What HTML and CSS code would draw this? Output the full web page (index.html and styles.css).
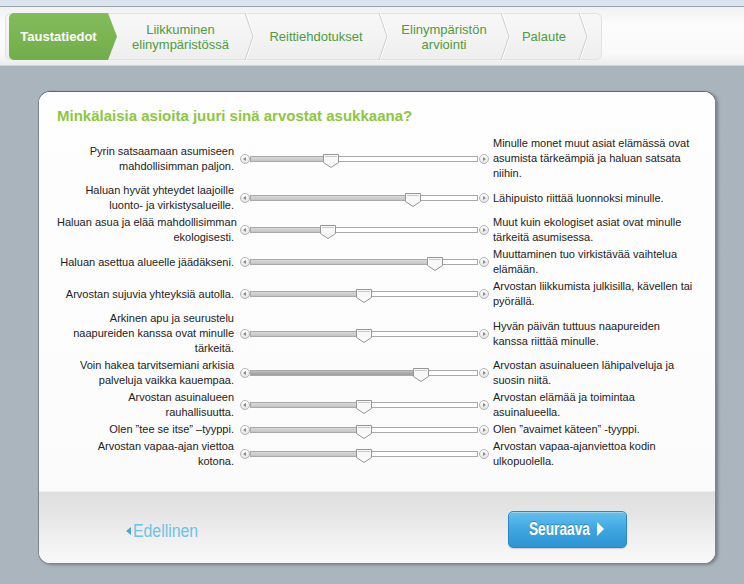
FILE: index.html
```html
<!DOCTYPE html>
<html lang="fi">
<head>
<meta charset="utf-8">
<title>Taustatiedot</title>
<link rel="stylesheet" href="styles.css">
</head>
<body>
<div class="topbar"></div>
<div class="navband">
  <nav class="steps">
    <div class="step active">Taustatiedot</div>
    <div class="step s2">Liikkuminen<br>elinympäristössä</div>
    <svg class="sep" viewBox="0 0 10 47"><polyline points="2,0 10,23.5 2,47" stroke="#ffffff" fill="none"/><polyline points="1,0 9,23.5 1,47" stroke="#cdcdcd" fill="none"/></svg>
    <div class="step s3">Reittiehdotukset</div>
    <svg class="sep" viewBox="0 0 10 47"><polyline points="2,0 10,23.5 2,47" stroke="#ffffff" fill="none"/><polyline points="1,0 9,23.5 1,47" stroke="#cdcdcd" fill="none"/></svg>
    <div class="step s4">Elinympäristön<br>arviointi</div>
    <svg class="sep" viewBox="0 0 10 47"><polyline points="2,0 10,23.5 2,47" stroke="#ffffff" fill="none"/><polyline points="1,0 9,23.5 1,47" stroke="#cdcdcd" fill="none"/></svg>
    <div class="step s5">Palaute</div>
    <svg class="sep" viewBox="0 0 10 47"><polyline points="2,0 10,23.5 2,47" stroke="#ffffff" fill="none"/><polyline points="1,0 9,23.5 1,47" stroke="#cdcdcd" fill="none"/></svg>
    <div class="step end"></div>
  </nav>
</div>

<main class="stage">
  <section class="panel">
    <div class="content">
      <h1 class="title">Minkälaisia asioita juuri sinä arvostat asukkaana?</h1>
      <div class="rows">

        <div class="row">
          <div class="lbl left">Pyrin satsaamaan asumiseen<br>mahdollisimman paljon.</div>
          <div class="slider"><span class="knob kl"></span><div class="track"><div class="fill" style="width:35.2%"></div><svg class="thumb" style="left:calc(35.2% - 8px)" viewBox="0 0 16 14"><path d="M0.5 0.5H15.5V8.5L8 13.5L0.5 8.5Z" fill="#f8f8f8" stroke="#969696"/><path d="M2 2.5H14" stroke="#c8c8c8"/></svg></div><span class="knob kr"></span></div>
          <div class="lbl right">Minulle monet muut asiat elämässä ovat<br>asumista tärkeämpiä ja haluan satsata<br>niihin.</div>
        </div>

        <div class="row">
          <div class="lbl left">Haluan hyvät yhteydet laajoille<br>luonto- ja virkistysalueille.</div>
          <div class="slider"><span class="knob kl"></span><div class="track"><div class="fill" style="width:71.8%"></div><svg class="thumb" style="left:calc(71.8% - 8px)" viewBox="0 0 16 14"><path d="M0.5 0.5H15.5V8.5L8 13.5L0.5 8.5Z" fill="#f8f8f8" stroke="#969696"/><path d="M2 2.5H14" stroke="#c8c8c8"/></svg></div><span class="knob kr"></span></div>
          <div class="lbl right">Lähipuisto riittää luonnoksi minulle.</div>
        </div>

        <div class="row">
          <div class="lbl left">Haluan asua ja elää mahdollisimman<br>ekologisesti.</div>
          <div class="slider"><span class="knob kl"></span><div class="track"><div class="fill" style="width:33.9%"></div><svg class="thumb" style="left:calc(33.9% - 8px)" viewBox="0 0 16 14"><path d="M0.5 0.5H15.5V8.5L8 13.5L0.5 8.5Z" fill="#f8f8f8" stroke="#969696"/><path d="M2 2.5H14" stroke="#c8c8c8"/></svg></div><span class="knob kr"></span></div>
          <div class="lbl right">Muut kuin ekologiset asiat ovat minulle<br>tärkeitä asumisessa.</div>
        </div>

        <div class="row">
          <div class="lbl left">Haluan asettua alueelle jäädäkseni.</div>
          <div class="slider"><span class="knob kl"></span><div class="track"><div class="fill" style="width:81.5%"></div><svg class="thumb" style="left:calc(81.5% - 8px)" viewBox="0 0 16 14"><path d="M0.5 0.5H15.5V8.5L8 13.5L0.5 8.5Z" fill="#f8f8f8" stroke="#969696"/><path d="M2 2.5H14" stroke="#c8c8c8"/></svg></div><span class="knob kr"></span></div>
          <div class="lbl right">Muuttaminen tuo virkistävää vaihtelua<br>elämään.</div>
        </div>

        <div class="row">
          <div class="lbl left">Arvostan sujuvia yhteyksiä autolla.</div>
          <div class="slider"><span class="knob kl"></span><div class="track"><div class="fill" style="width:50.2%"></div><svg class="thumb" style="left:calc(50.2% - 8px)" viewBox="0 0 16 14"><path d="M0.5 0.5H15.5V8.5L8 13.5L0.5 8.5Z" fill="#f8f8f8" stroke="#969696"/><path d="M2 2.5H14" stroke="#c8c8c8"/></svg></div><span class="knob kr"></span></div>
          <div class="lbl right">Arvostan liikkumista julkisilla, kävellen tai<br>pyörällä.</div>
        </div>

        <div class="row">
          <div class="lbl left">Arkinen apu ja seurustelu<br>naapureiden kanssa ovat minulle<br>tärkeitä.</div>
          <div class="slider"><span class="knob kl"></span><div class="track"><div class="fill" style="width:50.2%"></div><svg class="thumb" style="left:calc(50.2% - 8px)" viewBox="0 0 16 14"><path d="M0.5 0.5H15.5V8.5L8 13.5L0.5 8.5Z" fill="#f8f8f8" stroke="#969696"/><path d="M2 2.5H14" stroke="#c8c8c8"/></svg></div><span class="knob kr"></span></div>
          <div class="lbl right">Hyvän päivän tuttuus naapureiden<br>kanssa riittää minulle.</div>
        </div>

        <div class="row">
          <div class="lbl left">Voin hakea tarvitsemiani arkisia<br>palveluja vaikka kauempaa.</div>
          <div class="slider"><span class="knob kl"></span><div class="track"><div class="fill dark" style="width:75.3%"></div><svg class="thumb" style="left:calc(75.3% - 8px)" viewBox="0 0 16 14"><path d="M0.5 0.5H15.5V8.5L8 13.5L0.5 8.5Z" fill="#f8f8f8" stroke="#969696"/><path d="M2 2.5H14" stroke="#c8c8c8"/></svg></div><span class="knob kr"></span></div>
          <div class="lbl right">Arvostan asuinalueen lähipalveluja ja<br>suosin niitä.</div>
        </div>

        <div class="row">
          <div class="lbl left">Arvostan asuinalueen<br>rauhallisuutta.</div>
          <div class="slider"><span class="knob kl"></span><div class="track"><div class="fill" style="width:50.2%"></div><svg class="thumb" style="left:calc(50.2% - 8px)" viewBox="0 0 16 14"><path d="M0.5 0.5H15.5V8.5L8 13.5L0.5 8.5Z" fill="#f8f8f8" stroke="#969696"/><path d="M2 2.5H14" stroke="#c8c8c8"/></svg></div><span class="knob kr"></span></div>
          <div class="lbl right">Arvostan elämää ja toimintaa<br>asuinalueella.</div>
        </div>

        <div class="row">
          <div class="lbl left">Olen ”tee se itse” –tyyppi.</div>
          <div class="slider"><span class="knob kl"></span><div class="track"><div class="fill" style="width:50.2%"></div><svg class="thumb" style="left:calc(50.2% - 8px)" viewBox="0 0 16 14"><path d="M0.5 0.5H15.5V8.5L8 13.5L0.5 8.5Z" fill="#f8f8f8" stroke="#969696"/><path d="M2 2.5H14" stroke="#c8c8c8"/></svg></div><span class="knob kr"></span></div>
          <div class="lbl right">Olen ”avaimet käteen” -tyyppi.</div>
        </div>

        <div class="row">
          <div class="lbl left">Arvostan vapaa-ajan viettoa<br>kotona.</div>
          <div class="slider"><span class="knob kl"></span><div class="track"><div class="fill" style="width:50.2%"></div><svg class="thumb" style="left:calc(50.2% - 8px)" viewBox="0 0 16 14"><path d="M0.5 0.5H15.5V8.5L8 13.5L0.5 8.5Z" fill="#f8f8f8" stroke="#969696"/><path d="M2 2.5H14" stroke="#c8c8c8"/></svg></div><span class="knob kr"></span></div>
          <div class="lbl right">Arvostan vapaa-ajanviettoa kodin<br>ulkopuolella.</div>
        </div>

      </div>
    </div>
    <footer class="actions">
      <a class="prev" href="#"><span class="tri-l"></span><span class="prev-txt">Edellinen</span></a>
      <a class="next" href="#"><span class="next-txt">Seuraava</span><span class="tri-r"></span></a>
    </footer>
  </section>
</main>
</body>
</html>
```

FILE: styles.css
```css
html, body {
  margin: 0;
  padding: 0;
}
body {
  width: 744px;
  height: 584px;
  overflow: hidden;
  font-family: "Liberation Sans", Arial, sans-serif;
  font-size: 11px;
  color: #222;
  background: linear-gradient(#9ea8b1 0, #a9b4bd 24px, #aab5be 100%);
}

.topbar {
  height: 6px;
  background: #dbe4ee;
  border-bottom: 1px solid #9aa2aa;
}

.navband {
  height: 59px;
  box-sizing: border-box;
  padding: 6px 0 0 5px;
  background: linear-gradient(#f1f1f1 0, #fcfcfc 30%, #f9f9f9 80%, #ececec 100%);
  border-bottom: 1px solid #d0d4d8;
}

.steps {
  display: flex;
  width: 597px;
  height: 47px;
  box-sizing: border-box;
  padding-left: 4px;
  border-radius: 6px;
  background: linear-gradient(#f8f8f8, #eeeeee);
  box-shadow: inset 0 0 0 1px #e2e2e2;
}

.step {
  display: flex;
  align-items: center;
  justify-content: center;
  text-align: center;
  font-size: 13px;
  line-height: 15px;
  color: #4f9a3e;
  white-space: nowrap;
}

.step.active {
  width: 108px;
  padding-right: 9px;
  box-sizing: border-box;
  color: #fff;
  font-weight: bold;
  background: linear-gradient(#82bd5a, #72ad4b);
  border-radius: 5px 0 0 5px;
  clip-path: polygon(0 0, 99px 0, 108px 50%, 99px 100%, 0 100%);
}
.step.s2 { width: 127px; }
.step.s3 { width: 124px; }
.step.s4 { width: 112px; }
.step.s5 { width: 68px; }
.step.end { width: 14px; }

.sep {
  width: 10px;
  height: 47px;
  flex: none;
}

.stage {
  padding: 25px 0 0 38px;
}

.panel {
  width: 678px;
  height: 473px;
  box-sizing: border-box;
  background: #fff;
  border: 1px solid #7d848b;
  border-top-color: #5f666d;
  border-radius: 12px;
  box-shadow: 2px 1px 3px rgba(60, 66, 72, 0.45);
  display: flex;
  flex-direction: column;
  overflow: hidden;
}

.content {
  height: 399px;
  box-sizing: border-box;
  padding: 15px 0 0 18px;
  background: linear-gradient(#fefefe, #fbfbfb);
}

.title {
  margin: 0 0 11px 0;
  font-size: 15px;
  line-height: 18px;
  font-weight: bold;
  color: #8dc642;
}

.rows {
  display: flex;
  flex-direction: column;
  gap: 2px;
}

.row {
  display: flex;
  align-items: center;
}

.lbl {
  line-height: 15px;
  white-space: nowrap;
}
.lbl.left {
  width: 177px;
  text-align: right;
  flex: none;
}
.lbl.right {
  padding-left: 4px;
}

.slider {
  width: 249px;
  margin-left: 6px;
  display: flex;
  align-items: center;
  flex: none;
}

.knob {
  position: relative;
  width: 10px;
  height: 10px;
  box-sizing: border-box;
  border: 1px solid #b3b3b3;
  border-radius: 50%;
  background: linear-gradient(#ffffff, #e4e4e4);
  flex: none;
}
.knob::after {
  content: "";
  position: absolute;
  top: 2px;
  width: 0;
  height: 0;
  border-top: 2px solid transparent;
  border-bottom: 2px solid transparent;
}
.knob.kl::after {
  left: 2px;
  border-right: 3px solid #8a8a8a;
}
.knob.kr::after {
  left: 3px;
  border-left: 3px solid #8a8a8a;
}
.knob.kr { margin-left: 1px; }

.track {
  position: relative;
  width: 228px;
  height: 6px;
  box-sizing: border-box;
  border: 1px solid #a9a9a9;
  background: #fff;
  flex: none;
}
.fill {
  height: 100%;
  background: linear-gradient(#d9d9d9, #c4c4c4);
}
.fill.dark {
  background: linear-gradient(#bdbdbd, #9c9c9c);
}
.thumb {
  position: absolute;
  top: -3px;
  width: 16px;
  height: 14px;
}

.actions {
  flex: 1;
  display: flex;
  align-items: center;
  justify-content: space-between;
  padding: 3px 88px 0 87px;
  background: linear-gradient(#dfdfdf 0, #e5e5e5 30%, #f3f3f3 75%, #f8f8f8 100%);
  border-top: 1px solid #ececec;
}

.prev {
  display: flex;
  align-items: center;
  margin-top: 4px;
  font-size: 18px;
  color: #6cc3e6;
  text-decoration: none;
}
.prev-txt {
  display: inline-block;
  transform: scaleX(0.88);
  transform-origin: left center;
}
.tri-l {
  width: 0;
  height: 0;
  margin-right: 2px;
  border-top: 4px solid transparent;
  border-bottom: 4px solid transparent;
  border-right: 5px solid #45a8d8;
}

.next {
  width: 119px;
  height: 37px;
  box-sizing: border-box;
  padding: 0 22px 0 20px;
  display: flex;
  align-items: center;
  justify-content: space-between;
  font-weight: bold;
  font-size: 18px;
  color: #fff;
  text-decoration: none;
  text-shadow: 0 -1px 0 rgba(20, 90, 150, 0.5);
  border-radius: 5px;
  border: 1px solid #2a87c6;
  background: linear-gradient(#64c0ee, #3fa6e1 50%, #2d94d4);
  box-shadow: inset 0 1px 0 rgba(255, 255, 255, 0.35), 0 1px 1px rgba(0, 0, 0, 0.15);
}
.next-txt {
  display: inline-block;
  width: 57px;
  flex: none;
  white-space: nowrap;
  transform: scaleX(0.76);
  transform-origin: left center;
}
.tri-r {
  width: 0;
  height: 0;
  flex: none;
  border-top: 7px solid transparent;
  border-bottom: 7px solid transparent;
  border-left: 7px solid #fff;
}
```
